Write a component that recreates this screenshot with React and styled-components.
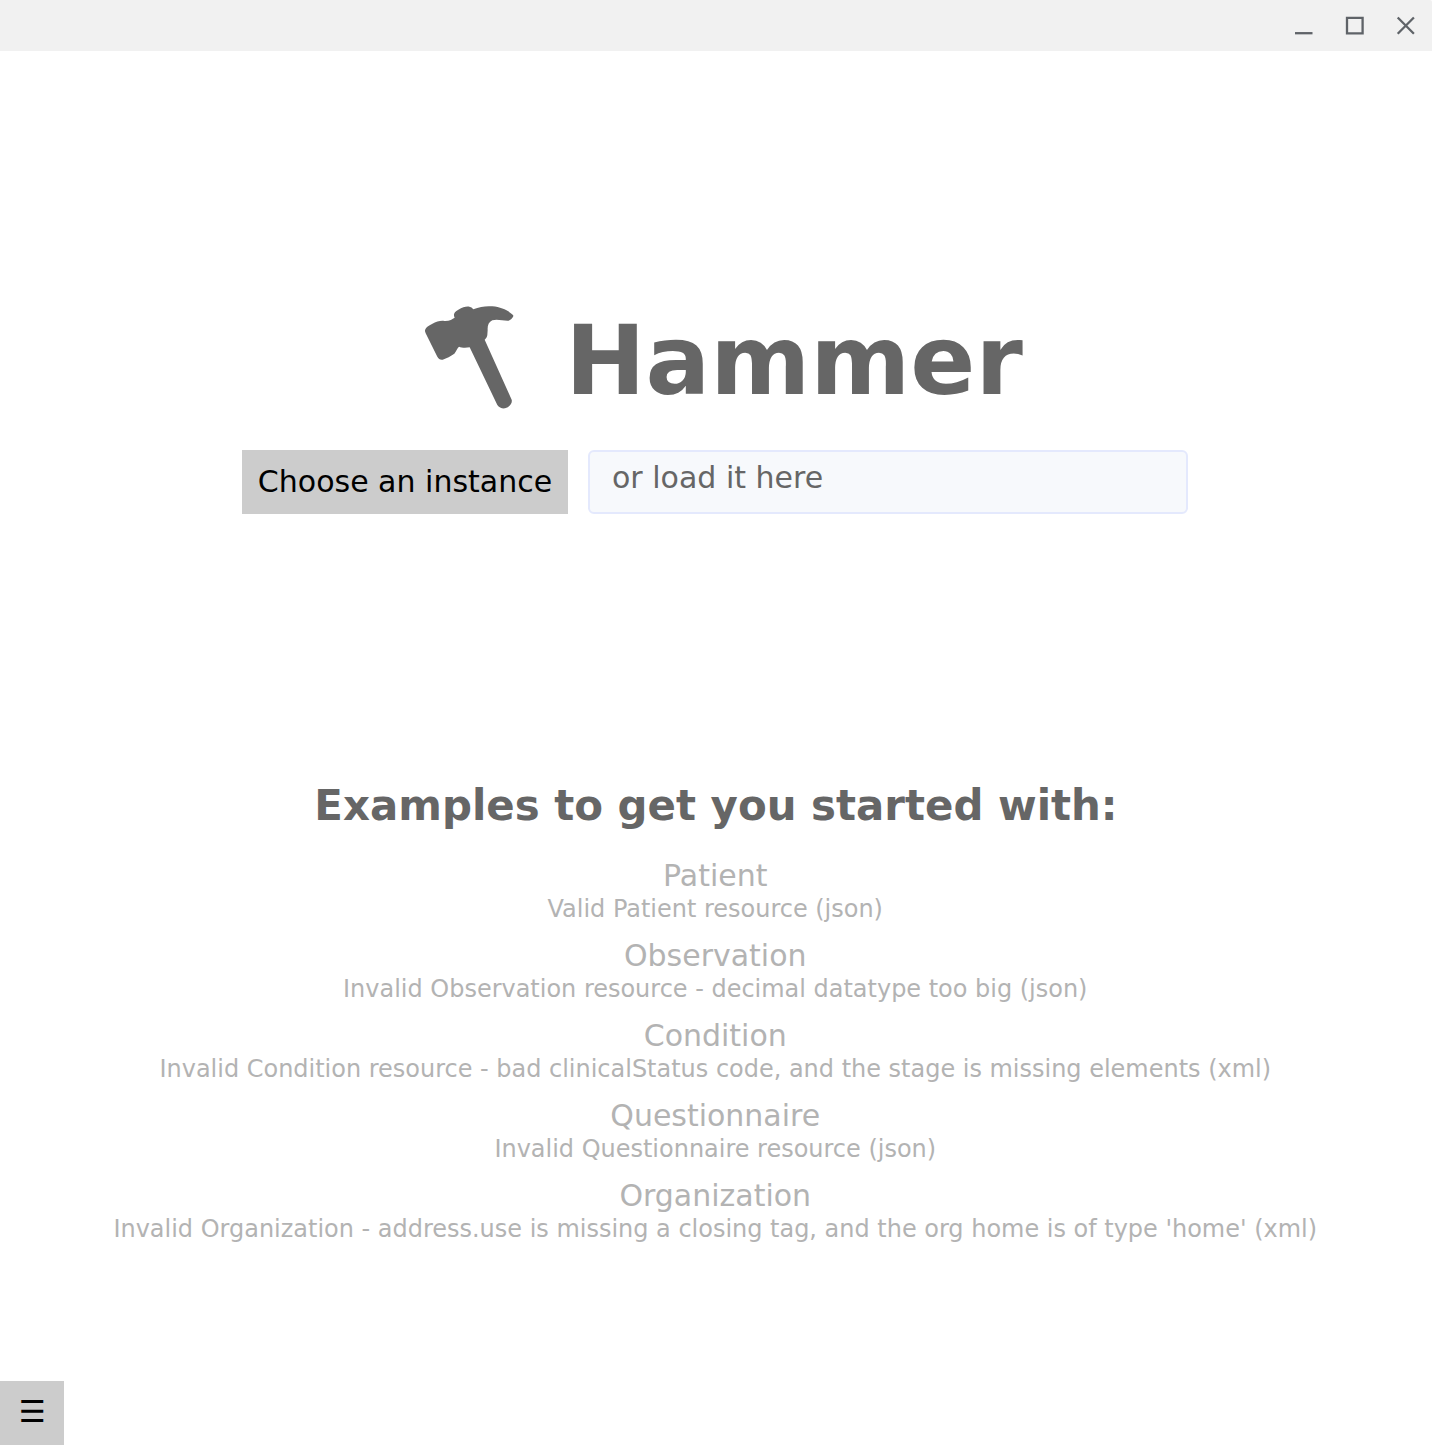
import React from "react";
import styled, { createGlobalStyle } from "styled-components";

const GlobalStyle = createGlobalStyle`
  * { box-sizing: border-box; }
  body { margin: 0; background: #fff; font-family: "DejaVu Sans", sans-serif; }
`;

const Window = styled.div`
  display: flex;
  flex-direction: column;
  height: 1445px;
  overflow: hidden;
  background: #fff;
`;

const TitleBar = styled.header`
  display: flex;
  justify-content: flex-end;
  flex: none;
  height: 51px;
  background: #f1f1f1;
  border-top-right-radius: 2px;
`;

const WindowControl = styled.svg`
  width: 51px;
  height: 51px;
  fill: none;
  stroke: #5f6368;
  stroke-width: 2.3;
`;

const Main = styled.main`
  display: flex;
  flex-direction: column;
  align-items: center;
  flex: 1;
`;

const Brand = styled.h1`
  display: flex;
  align-items: center;
  gap: 35px;
  height: 130px;
  margin: 239px 0 0;
  padding-left: 1px;
  color: #666;
  font-size: 96px;
  line-height: 112px;
`;

const HammerIcon = styled.svg`
  width: 120px;
  height: 130px;
  fill: #666;
`;

const BrandName = styled.span`
  padding-top: 12px;
`;

const Loader = styled.section`
  display: flex;
  gap: 20px;
  height: 64px;
  margin: 30px 2px 0 0;
`;

const ChooseButton = styled.button`
  width: 326px;
  padding: 0 0 2px;
  border: 0;
  background: #ccc;
  color: #000;
  font: 30px "DejaVu Sans", sans-serif;
`;

const InstanceInput = styled.div`
  width: 600px;
  padding: 8px 22px;
  border: 2px solid #e4e9fd;
  border-radius: 6px;
  background: #f7f9fc;
  color: #666;
  font-size: 30px;
  line-height: 36px;
`;

const ExamplesTitle = styled.h2`
  margin: 267px 0 0;
  height: 78px;
  color: #666;
  font-size: 41.9px;
  line-height: 50px;
`;

const Example = styled.a`
  display: flex;
  flex-direction: column;
  align-items: center;
  height: 80px;
  padding-right: 1.5px;
  color: #b3b3b3;
`;

const ExampleName = styled.span`
  font-size: 29.97px;
  line-height: 34px;
`;

const ExampleDetail = styled.span`
  padding-top: 1px;
  font-size: 23.97px;
  line-height: 30px;
  white-space: nowrap;
`;

const MenuButton = styled.button`
  flex: none;
  width: 64px;
  height: 64px;
  padding: 0 0 3px 1px;
  border: 0;
  background: #ccc;
  color: #000;
  font: 30px "DejaVu Sans", sans-serif;
`;

const examples = [
  ["Patient", "Valid Patient resource (json)"],
  ["Observation", "Invalid Observation resource - decimal datatype too big (json)"],
  ["Condition", "Invalid Condition resource - bad clinicalStatus code, and the stage is missing elements (xml)"],
  ["Questionnaire", "Invalid Questionnaire resource (json)"],
  ["Organization", "Invalid Organization - address.use is missing a closing tag, and the org home is of type 'home' (xml)"],
];

export default function App() {
  return (
    <Window>
      <GlobalStyle />
      <TitleBar>
        <WindowControl viewBox="0 0 51 51"><path d="M16 33.2h17.5" /></WindowControl>
        <WindowControl viewBox="0 0 51 51"><path d="M17 17.8h15.6v15.6h-15.6z" /></WindowControl>
        <WindowControl viewBox="0 0 51 51"><path d="M16.7 17.5 32.9 33.7M32.9 17.5 16.7 33.7" /></WindowControl>
      </TitleBar>
      <Main>
        <Brand>
          <HammerIcon viewBox="0 0 360 390">
            <path d="M45 124C44 115 54 108 66 102C80 95 92 91 103 93C118 94 127 87 134 83C129 74 132 66 145 59C158 51 168 49 178 50C185 51 188 55 190 58C210 50 229 47 247 49C275 51 298 64 309 75C313 79 304 90 296 92C280 93 262 86 247 91C236 96 232 107 233 120L232 135C231 141 228 146 224 149L305 329C308 339 298 352 285 355C275 356 267 352 262 345L179 172C168 174 155 174 147 170C142 173 139 184 133 191C122 198 110 205 98 209C90 210 86 207 82 200L47 130Z" />
          </HammerIcon>
          <BrandName>Hammer</BrandName>
        </Brand>
        <Loader>
          <ChooseButton>Choose an instance</ChooseButton>
          <InstanceInput>or load it here</InstanceInput>
        </Loader>
        <ExamplesTitle>Examples to get you started with:</ExamplesTitle>
        {examples.map(([name, detail]) => (
          <Example key={name}>
            <ExampleName>{name}</ExampleName>
            <ExampleDetail>{detail}</ExampleDetail>
          </Example>
        ))}
      </Main>
      <MenuButton>☰</MenuButton>
    </Window>
  );
}
